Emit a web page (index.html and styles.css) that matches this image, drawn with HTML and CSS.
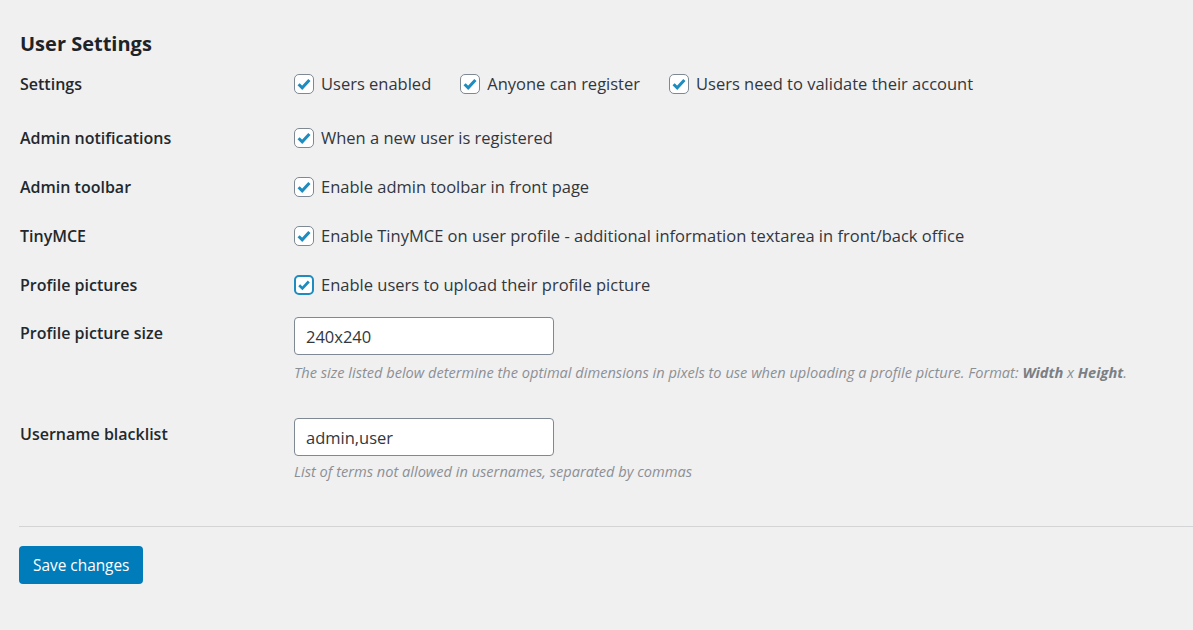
FILE: index.html
```html
<!DOCTYPE html>
<html lang="en">
<head>
  <meta charset="UTF-8" />
  <title>User Settings</title>
  <link rel="stylesheet" href="styles.css">
</head>
<body>
  <div class="wrap">
    <h2 class="title">User Settings</h2>

    <div class="row row-first">
      <div class="label">Settings</div>
      <div class="field inline">
        <label class="check"><span class="box"><svg viewBox="0 0 20 20"><path d="M4 10.3l4 3.9 8-8.6"/></svg></span>Users enabled</label>
        <label class="check"><span class="box"><svg viewBox="0 0 20 20"><path d="M4 10.3l4 3.9 8-8.6"/></svg></span>Anyone can register</label>
        <label class="check"><span class="box"><svg viewBox="0 0 20 20"><path d="M4 10.3l4 3.9 8-8.6"/></svg></span>Users need to validate their account</label>
      </div>
    </div>

    <div class="row">
      <div class="label">Admin notifications</div>
      <div class="field">
        <label class="check"><span class="box"><svg viewBox="0 0 20 20"><path d="M4 10.3l4 3.9 8-8.6"/></svg></span>When a new user is registered</label>
      </div>
    </div>

    <div class="row">
      <div class="label">Admin toolbar</div>
      <div class="field">
        <label class="check"><span class="box"><svg viewBox="0 0 20 20"><path d="M4 10.3l4 3.9 8-8.6"/></svg></span>Enable admin toolbar in front page</label>
      </div>
    </div>

    <div class="row">
      <div class="label">TinyMCE</div>
      <div class="field">
        <label class="check"><span class="box"><svg viewBox="0 0 20 20"><path d="M4 10.3l4 3.9 8-8.6"/></svg></span>Enable TinyMCE on user profile - additional information textarea in front/back office</label>
      </div>
    </div>

    <div class="row">
      <div class="label">Profile pictures</div>
      <div class="field">
        <label class="check"><span class="box focus"><svg viewBox="0 0 20 20"><path d="M4 10.3l4 3.9 8-8.6"/></svg></span>Enable users to upload their profile picture</label>
      </div>
    </div>

    <div class="row row-input">
      <div class="label">Profile picture size</div>
      <div class="field">
        <input class="text" type="text" value="240x240">
        <p class="description">The size listed below determine the optimal dimensions in pixels to use when uploading a profile picture. Format: <b>Width</b> x <b>Height</b>.</p>
      </div>
    </div>

    <div class="row row-input row-last">
      <div class="label">Username blacklist</div>
      <div class="field">
        <input class="text" type="text" value="admin,user">
        <p class="description">List of terms not allowed in usernames, separated by commas</p>
      </div>
    </div>

    <hr class="sep">

    <button class="button-primary">Save changes</button>
  </div>
</body>
</html>
```

FILE: styles.css
```css
body {
  margin: 0;
  background: #f0f0f1;
  font-family: "Open Sans", "Noto Sans", sans-serif;
  font-size: 16px;
  color: #32373c;
}
.wrap {
  padding: 30px 0 0 20px;
}
.title {
  margin: 0 0 2px;
  font-size: 20px;
  line-height: 28px;
  font-weight: 700;
  color: #1d2327;
}
.row {
  display: grid;
  grid-template-columns: 274px 1fr;
  padding: 12px 0 13px;
  line-height: 24px;
}
.row-first {
  padding-bottom: 18px;
}
.label {
  font-weight: 600;
  color: #23282d;
}
.field {
  font-size: 16.5px;
}
.inline {
  display: flex;
  gap: 29px;
}
.check {
  display: flex;
  align-items: center;
  gap: 7px;
}
.box {
  width: 20px;
  height: 20px;
  box-sizing: border-box;
  border: 1px solid #7e8993;
  border-radius: 5px;
  background: #fff;
  display: flex;
  align-items: center;
  justify-content: center;
}
.box svg {
  width: 18px;
  height: 18px;
  fill: none;
  stroke: #1e8cbe;
  stroke-width: 3.4;
}
.box.focus {
  border: 2px solid #1e8cbe;
}
.row-input {
  padding: 7px 0 0;
}
.row-input .label {
  padding-top: 4px;
}
.text {
  display: block;
  width: 260px;
  height: 38px;
  box-sizing: border-box;
  border: 1px solid #7e8993;
  border-radius: 4px;
  padding: 0 11px;
  font: 16.5px "Open Sans", "Noto Sans", sans-serif;
  color: #32373c;
  background: #fff;
}
.description {
  margin: 7px 0 0;
  font-size: 14.6px;
  line-height: 20px;
  font-style: italic;
  color: #8c8f94;
}
.row-last .description {
  margin-top: 5px;
}
.description b {
  font-weight: 700;
  color: #7a7f84;
}
.row-input + .row-input {
  padding-top: 36px;
}
.sep {
  margin: 45px 0 0 -1px;
  border: 0;
  border-top: 1px solid #d3d4d6;
}
.button-primary {
  margin: 19px 0 0 -1px;
  height: 38px;
  padding: 0 14px;
  border: 0;
  border-radius: 4px;
  background: #007cba;
  color: #fff;
  font: 15.4px "Open Sans", "Noto Sans", sans-serif;
}
```
